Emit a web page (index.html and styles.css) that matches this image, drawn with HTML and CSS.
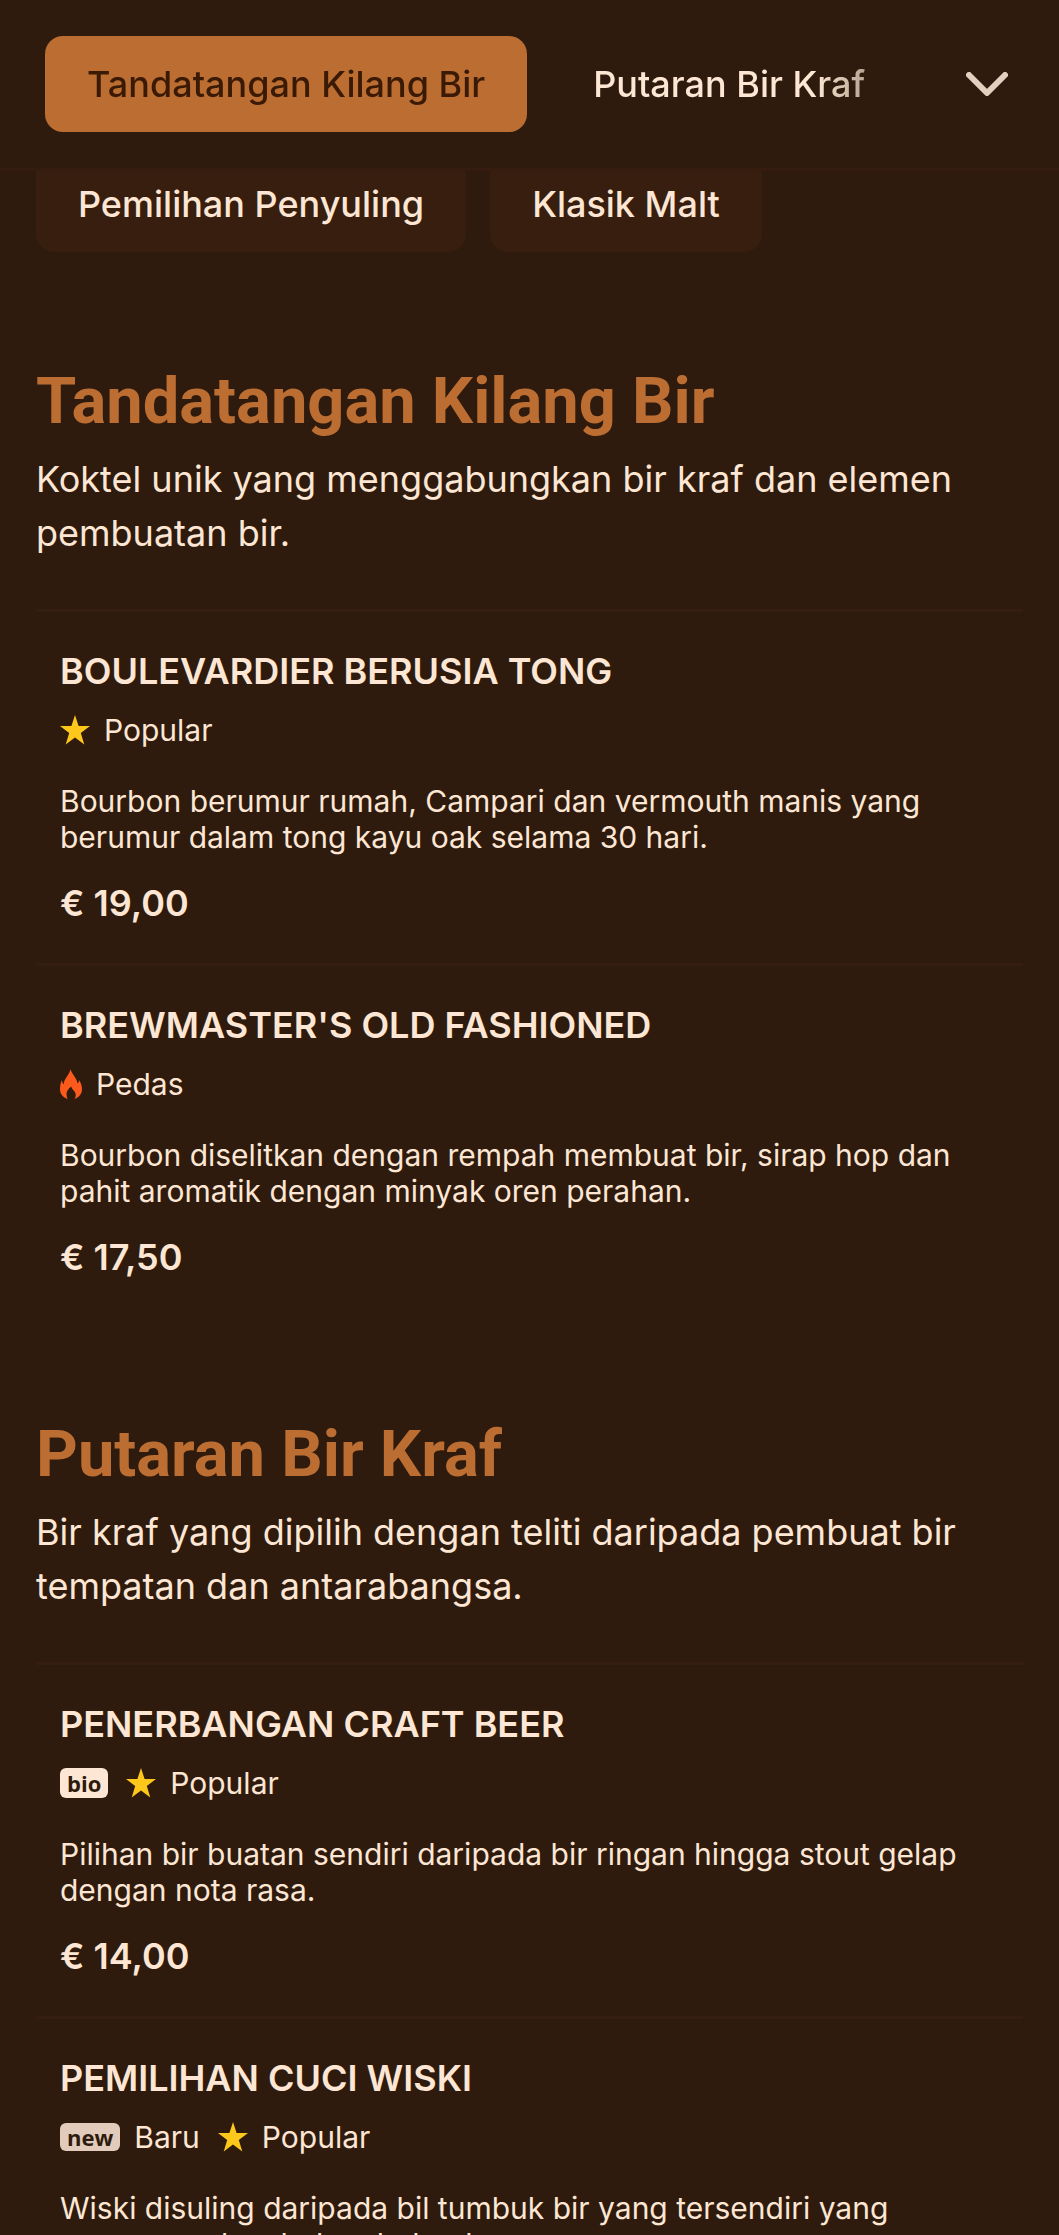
FILE: index.html
```html
<!DOCTYPE html>
<html lang="ms">

<head>
    <meta charset="UTF-8">
    <meta name="viewport" content="width=device-width, initial-scale=1.0">
    <title>Menu</title>
    <link rel="stylesheet" href="styles.css">
</head>

<body>

    <!-- shared icons -->
    <svg class="sprite" aria-hidden="true">
        <symbol id="star" viewBox="0 0 30 30">
            <path d="M15 0l3.6 11H30l-9.2 6.9L24.3 29.5 15 22.6 5.7 29.5l3.5-11.600L0 11h11.4z" />
        </symbol>
        <symbol id="flame" viewBox="0 0 22 30">
            <path d="M10.500 0C11.500 5 17 9 17.500 14.500c1-1 1.500-1.800 1.500-3.500C21 14 22 17 22 20c0 5-3 8.500-7.500 10 2-3 1.600-6-.6-8.300-1.300-1.200-2.300-2.300-2.500-4.200C8.500 19.500 6.500 22 6.500 25.300c0 1.700.5 3.200 1.200 4.600C3 28.500 0 25 0 20c0-3 .6-6.500 2-9 .1 2 .6 3.300 1.700 4.300C4 9.500 9.500 6 10.500 0z" />
        </symbol>
    </svg>

    <header class="topbar">
        <nav class="tabs">
            <a class="tab active" href="#tandatangan">Tandatangan Kilang Bir</a>
            <a class="tab" href="#putaran">Putaran Bir Kraf</a>
        </nav>
        <button class="toggle" type="button" aria-label="Semua kategori">
            <svg viewBox="0 0 42 24">
                <path d="M3 3l18 18L39 3" />
            </svg>
        </button>
    </header>

    <main class="page">
        <nav class="pills">
            <a class="pill" href="#penyuling">Pemilihan Penyuling</a>
            <a class="pill" href="#malt">Klasik Malt</a>
        </nav>

        <section class="category" id="tandatangan">
            <h2>Tandatangan Kilang Bir</h2>
            <p class="intro">Koktel unik yang menggabungkan bir kraf dan elemen pembuatan bir.</p>

            <article class="item">
                <h3>BOULEVARDIER BERUSIA TONG</h3>
                <div class="labels">
                    <span class="label"><svg class="star"><use href="#star" /></svg>Popular</span>
                </div>
                <p class="desc">Bourbon berumur rumah, Campari dan vermouth manis yang berumur dalam tong kayu oak selama 30 hari.</p>
                <p class="price">€ 19,00</p>
            </article>

            <article class="item">
                <h3>BREWMASTER'S OLD FASHIONED</h3>
                <div class="labels">
                    <span class="label"><svg class="flame"><use href="#flame" /></svg>Pedas</span>
                </div>
                <p class="desc">Bourbon diselitkan dengan rempah membuat bir, sirap hop dan pahit aromatik dengan minyak oren perahan.</p>
                <p class="price">€ 17,50</p>
            </article>
        </section>

        <section class="category" id="putaran">
            <h2>Putaran Bir Kraf</h2>
            <p class="intro">Bir kraf yang dipilih dengan teliti daripada pembuat bir tempatan dan antarabangsa.</p>

            <article class="item">
                <h3>PENERBANGAN CRAFT BEER</h3>
                <div class="labels">
                    <span class="badge">bio</span>
                    <span class="label"><svg class="star"><use href="#star" /></svg>Popular</span>
                </div>
                <p class="desc">Pilihan bir buatan sendiri daripada bir ringan hingga stout gelap dengan nota rasa.</p>
                <p class="price">€ 14,00</p>
            </article>

            <article class="item">
                <h3>PEMILIHAN CUCI WISKI</h3>
                <div class="labels">
                    <span class="label"><span class="badge new">new</span>Baru</span>
                    <span class="label"><svg class="star"><use href="#star" /></svg>Popular</span>
                </div>
                <p class="desc">Wiski disuling daripada bil tumbuk bir yang tersendiri yang mempamerkan bahan bakar kayu.</p>
            </article>
        </section>
    </main>

</body>

</html>
```

FILE: styles.css
```css
* {
    box-sizing: border-box;
}

body {
    margin: 0;
    height: 100vh;
    overflow: hidden;
    background: #2e1b0d;
    color: #fde6d3;
    font-family: Inter, sans-serif;
    font-size: 36px;
}

h2,
h3,
p {
    margin: 0;
}

a {
    color: inherit;
    text-decoration: none;
}

.sprite {
    position: absolute;
    width: 0;
    height: 0;
}

.topbar {
    position: fixed;
    top: 0;
    left: 0;
    right: 0;
    z-index: 10;
    display: flex;
    align-items: center;
    justify-content: space-between;
    padding: 36px 51px 36px 45px;
    background: #2e1b0d;
    border-bottom: 3px solid #351c0e;
}

.tabs {
    display: flex;
    flex: 1;
    gap: 24px;
    overflow: hidden;
    -webkit-mask-image: linear-gradient(to right, #000 calc(100% - 150px), transparent);
    mask-image: linear-gradient(to right, #000 calc(100% - 150px), transparent);
}

.tab,
.pill {
    padding: 24px 42px;
    border-radius: 18px;
    font-weight: 500;
    line-height: 48px;
    white-space: nowrap;
}

.tab.active {
    background: #bb6d32;
    color: #3a1a05;
}

.toggle {
    display: flex;
    padding: 0;
    border: none;
    background: none;
}

.toggle svg {
    width: 42px;
    height: 24px;
    fill: none;
    stroke: #e5cfbe;
    stroke-width: 6;
    stroke-linecap: round;
    stroke-linejoin: round;
}

.page {
    padding: 156px 36px 0;
}

.pills {
    display: flex;
    gap: 24px;
    margin-bottom: 12px;
}

.pill {
    background: #371e0e;
}

.category {
    padding-top: 96px;
}

h2 {
    color: #bb6d32;
    font-family: Roboto, sans-serif;
    font-size: 65px;
    font-weight: 700;
    line-height: 82px;
}

.intro {
    padding: 10px 0 49px;
    line-height: 54px;
}

.item {
    padding: 35px 24px 36px;
    border-top: 3px solid #351d0f;
}

h3 {
    font-size: 36px;
    font-weight: 600;
    line-height: 48px;
}

.labels {
    display: flex;
    align-items: center;
    gap: 18px;
    margin: 12px 0 30px;
    font-size: 30px;
    line-height: 46px;
}

.label {
    display: flex;
    align-items: center;
    gap: 14px;
}

.star {
    width: 30px;
    height: 30px;
    fill: #fdc81b;
}

.flame {
    width: 22px;
    height: 30px;
    fill: #fb5a1c;
}

.badge {
    padding: 0 7px;
    border-radius: 6px;
    background: #fde6d3;
    color: #2e1b0d;
    font-family: "Open Sans", sans-serif;
    font-size: 22px;
    font-weight: 700;
    line-height: 30px;
}

.badge.new {
    background: #e2cbbb;
    line-height: 28px;
}

.desc {
    font-size: 30px;
    line-height: 36px;
}

.price {
    margin-top: 24px;
    font-weight: 600;
    line-height: 48px;
}
```
